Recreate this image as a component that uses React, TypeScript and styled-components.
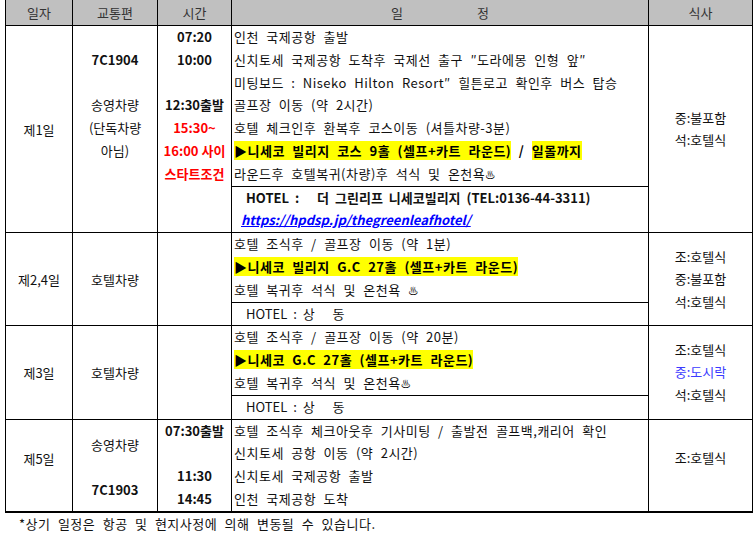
import * as React from 'react';
import styled, {createGlobalStyle} from "styled-components";

const GlobalStyle = createGlobalStyle`
  body {
    margin: 0;
    background: #fff;
    font-family: "Noto Sans CJK KR", "Noto Sans", sans-serif;
    color: #111;
  }
`

const Sheet = styled.div`
  padding-left: 5px;
  margin-top: -1px;
`

const Table = styled.table`
  width: 747px;
  border-collapse: collapse;
  table-layout: fixed;
  border-bottom: 2px solid #000;
  font-size: 13px;
`

const HeadCell = styled.th`
  height: 25px;
  padding: 0;
  border: 1px solid #000;
  background: #c0c0c0;
  color: #333;
  font-weight: 400;
  font-size: 13px;
  text-align: center;
  vertical-align: middle;
`

const Spread = styled.span`
  display: inline-flex;
  gap: 74px;
`

const Cell = styled.td<{ $top?: boolean; $lift?: number; $pushDown?: number }>`
  padding: ${p => p.$pushDown ?? 0}px 0 ${p => p.$lift ?? 0}px;
  border: 1px solid #000;
  text-align: center;
  vertical-align: ${p => p.$top ? 'top' : 'middle'};
`

const PlanCell = styled.td`
  padding: 0;
  border: 1px solid #000;
  text-align: left;
  vertical-align: top;
  letter-spacing: 0.5px;
  word-spacing: 4px;
`

const Line = styled.div<{ $bold?: boolean; $color?: string }>`
  height: 22.8px;
  line-height: 22.8px;
  white-space: pre;
  font-weight: ${p => p.$bold ? 700 : 400};
  color: ${p => p.$color ?? '#111'};
`

const PlanLine = styled(Line)`
  padding-left: 2px;
`

const Mark = styled.span`
  background: #ffff00;
  font-weight: 700;
  color: #000;
`

const Strong = styled.span`
  font-weight: 700;
  color: #000;
`

// 온천 마크는 본문보다 작게
const Spa = styled.span`
  font-size: 10px;
  letter-spacing: 0;
`

const HotelBlock = styled.div`
  border-top: 1px solid #000;
`

const HotelLine = styled(Line)<{ $indent?: number }>`
  padding-left: ${p => p.$indent ?? 14}px;
  letter-spacing: 0;
  word-spacing: 3px;
`

const SiteLink = styled.a`
  color: #0000ff;
  font-weight: 700;
  font-style: italic;
  text-decoration: underline;
`

const Meal = styled.div<{ $color?: string }>`
  line-height: 22.5px;
  color: ${p => p.$color ?? '#111'};
`

const Note = styled.div`
  padding-left: 14px;
  height: 24px;
  line-height: 22px;
  font-size: 13px;
  letter-spacing: 0.5px;
  word-spacing: 4px;
  color: #111;
`

const RED = '#ff0000';

const Stack = ({lines}: { lines: { text: string; bold?: boolean; color?: string }[] }) => (
    <>
        {lines.map((l, i) => (
            <Line key={i} $bold={l.bold} $color={l.color}>{l.text || ' '}</Line>
        ))}
    </>
);

const SameHotel = () => (
    <HotelBlock>
        <HotelLine>{'HOTEL : 상   동'}</HotelLine>
    </HotelBlock>
);

export default function App() {
    return (
        <Sheet>
            <GlobalStyle/>
            <Table>
                <colgroup>
                    <col style={{width: 67}}/>
                    <col style={{width: 85}}/>
                    <col style={{width: 74}}/>
                    <col style={{width: 417}}/>
                    <col style={{width: 104}}/>
                </colgroup>
                <thead>
                <tr>
                    <HeadCell>일자</HeadCell>
                    <HeadCell>교통편</HeadCell>
                    <HeadCell>시간</HeadCell>
                    <HeadCell><Spread><span>일</span><span>정</span></Spread></HeadCell>
                    <HeadCell>식사</HeadCell>
                </tr>
                </thead>
                <tbody>
                <tr>
                    <Cell>제1일</Cell>
                    <Cell $top>
                        <Stack lines={[
                            {text: ''},
                            {text: '7C1904', bold: true},
                            {text: ''},
                            {text: '송영차량'},
                            {text: '(단독차량'},
                            {text: '아님)'},
                        ]}/>
                    </Cell>
                    <Cell $top>
                        <Stack lines={[
                            {text: '07:20', bold: true},
                            {text: '10:00', bold: true},
                            {text: ''},
                            {text: '12:30출발', bold: true},
                            {text: '15:30~', bold: true, color: RED},
                            {text: '16:00 사이', bold: true, color: RED},
                            {text: '스타트조건', bold: true, color: RED},
                        ]}/>
                    </Cell>
                    <PlanCell>
                        <PlanLine>인천 국제공항 출발</PlanLine>
                        <PlanLine>신치토세 국제공항 도착후 국제선 출구 ″도라에몽 인형 앞″</PlanLine>
                        <PlanLine>미팅보드 : Niseko Hilton Resort″ 힐튼로고 확인후 버스 탑승</PlanLine>
                        <PlanLine>골프장 이동 (약 2시간)</PlanLine>
                        <PlanLine>호텔 체크인후 환복후 코스이동 (셔틀차량-3분)</PlanLine>
                        <PlanLine>
                            <Mark>▶니세코 빌리지 코스 9홀 (셀프+카트 라운드)</Mark>
                            <Strong> / </Strong>
                            <Mark>일몰까지</Mark>
                        </PlanLine>
                        <PlanLine>라운드후 호텔복귀(차량)후 석식 및 온천욕<Spa>♨</Spa></PlanLine>
                        <HotelBlock>
                            <HotelLine $bold>{'HOTEL :   더 그린리프 니세코빌리지 (TEL:0136-44-3311)'}</HotelLine>
                            <HotelLine $indent={9}>
                                <SiteLink href="#">https://hpdsp.jp/thegreenleafhotel/</SiteLink>
                            </HotelLine>
                        </HotelBlock>
                    </PlanCell>
                    <Cell>
                        <Meal>중:불포함</Meal>
                        <Meal>석:호텔식</Meal>
                    </Cell>
                </tr>
                <tr>
                    <Cell>제2,4일</Cell>
                    <Cell>호텔차량</Cell>
                    <Cell/>
                    <PlanCell>
                        <PlanLine>호텔 조식후 / 골프장 이동 (약 1분)</PlanLine>
                        <PlanLine><Mark>▶니세코 빌리지 G.C 27홀 (셀프+카트 라운드)</Mark></PlanLine>
                        <PlanLine>호텔 복귀후 석식 및 온천욕 <Spa>♨</Spa></PlanLine>
                        <SameHotel/>
                    </PlanCell>
                    <Cell>
                        <Meal>조:호텔식</Meal>
                        <Meal>중:불포함</Meal>
                        <Meal>석:호텔식</Meal>
                    </Cell>
                </tr>
                <tr>
                    <Cell>제3일</Cell>
                    <Cell>호텔차량</Cell>
                    <Cell/>
                    <PlanCell>
                        <PlanLine>호텔 조식후 / 골프장 이동 (약 20분)</PlanLine>
                        <PlanLine><Mark>▶니세코 G.C 27홀 (셀프+카트 라운드)</Mark></PlanLine>
                        <PlanLine>호텔 복귀후 석식 및 온천욕<Spa>♨</Spa></PlanLine>
                        <SameHotel/>
                    </PlanCell>
                    <Cell>
                        <Meal>조:호텔식</Meal>
                        <Meal $color="#3b3bff">중:도시락</Meal>
                        <Meal>석:호텔식</Meal>
                    </Cell>
                </tr>
                <tr>
                    <Cell $lift={14}>제5일</Cell>
                    <Cell $top $pushDown={14}>
                        <Stack lines={[
                            {text: '송영차량'},
                            {text: ''},
                            {text: '7C1903', bold: true},
                        ]}/>
                    </Cell>
                    <Cell $top>
                        <Stack lines={[
                            {text: '07:30출발', bold: true},
                            {text: ''},
                            {text: '11:30', bold: true},
                            {text: '14:45', bold: true},
                        ]}/>
                    </Cell>
                    <PlanCell>
                        <PlanLine>호텔 조식후 체크아웃후 기사미팅 / 출발전 골프백,캐리어 확인</PlanLine>
                        <PlanLine>신치토세 공항 이동 (약 2시간)</PlanLine>
                        <PlanLine>신치토세 국제공항 출발</PlanLine>
                        <PlanLine>인천 국제공항 도착</PlanLine>
                    </PlanCell>
                    <Cell $lift={14}>
                        <Meal>조:호텔식</Meal>
                    </Cell>
                </tr>
                </tbody>
            </Table>
            <Note>*상기 일정은 항공 및 현지사정에 의해 변동될 수 있습니다.</Note>
        </Sheet>
    );
}
